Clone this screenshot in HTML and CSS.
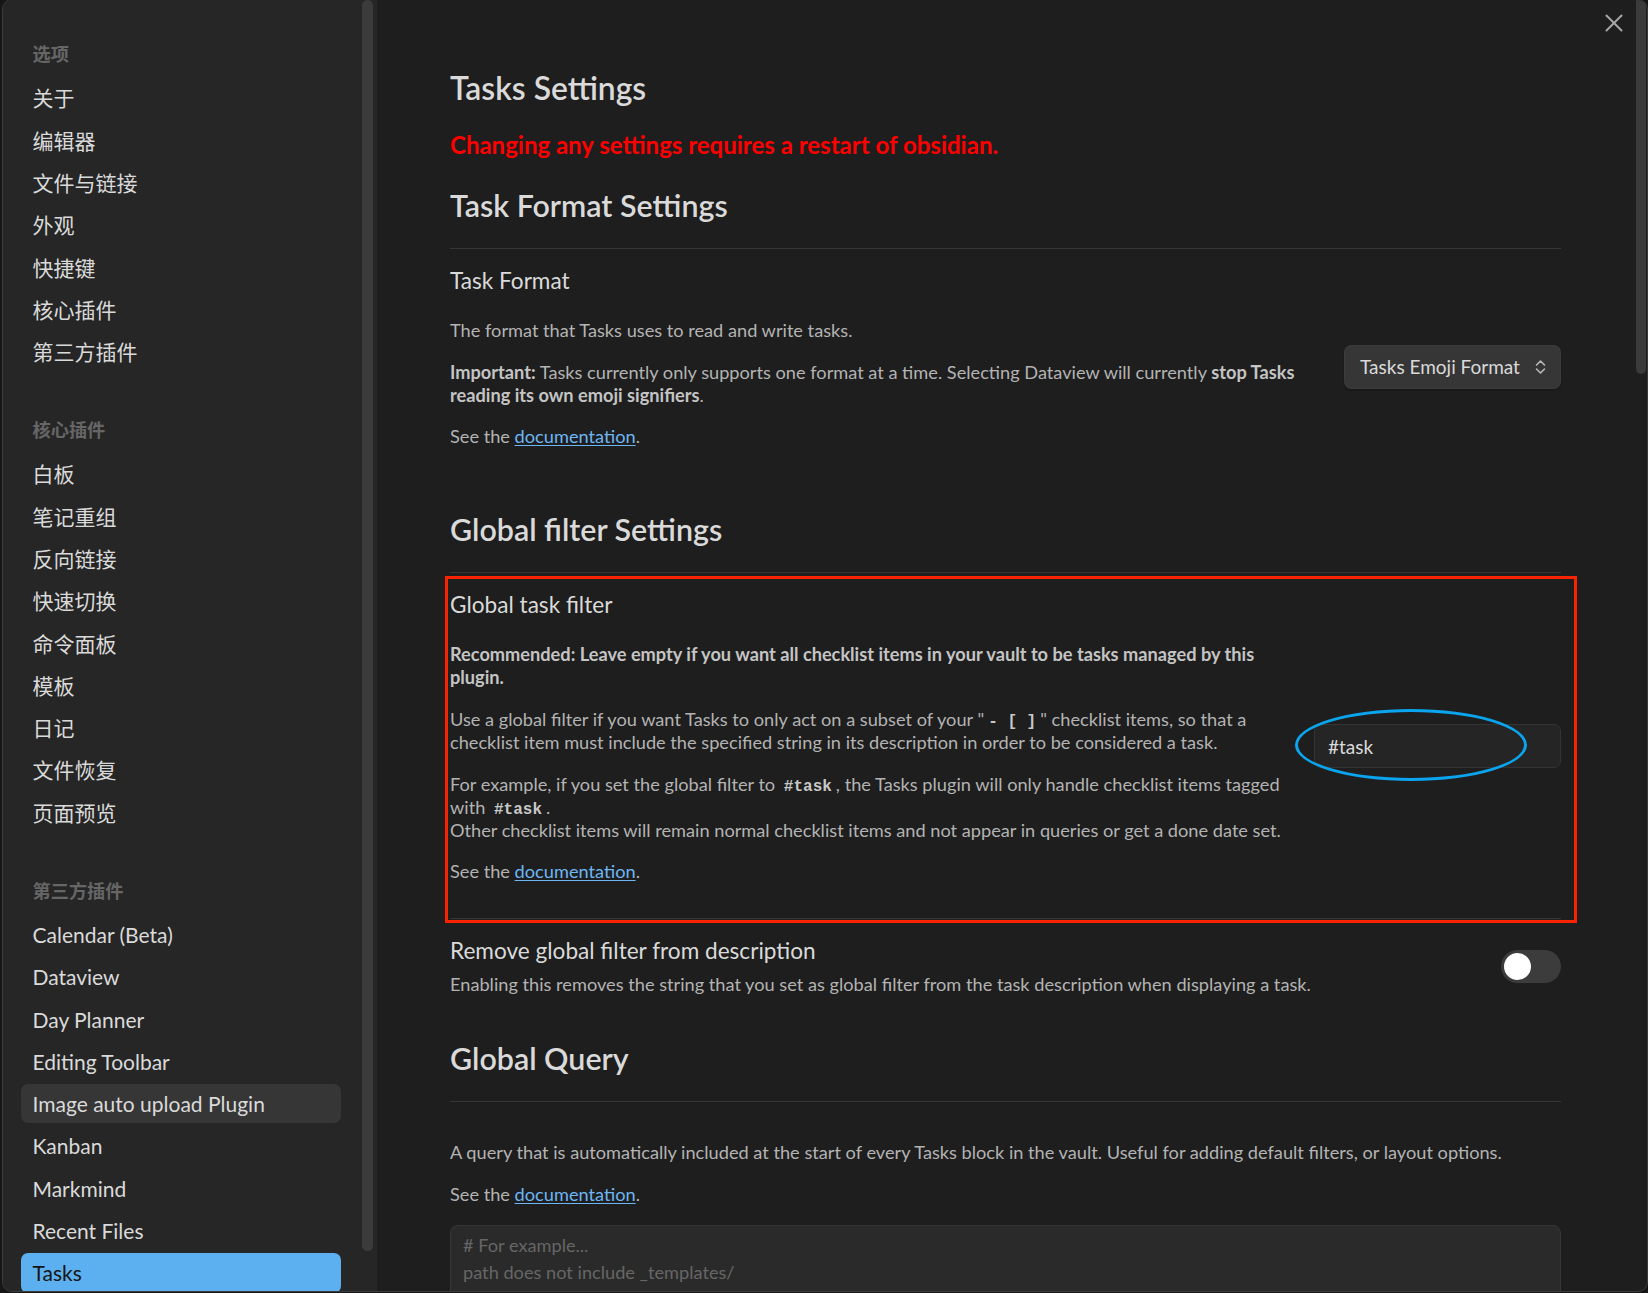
FILE: index.html
```html
<!DOCTYPE html>
<html lang="zh-CN">
<head>
<meta charset="utf-8">
<title>Tasks Settings</title>
<link rel="stylesheet" href="styles.css">
</head>
<body>
<div class="modal">
  <aside class="sidebar">
    <nav class="nav">
      <div class="nav-group">
        <div class="nav-title">选项</div>
        <div class="nav-item">关于</div>
        <div class="nav-item">编辑器</div>
        <div class="nav-item">文件与链接</div>
        <div class="nav-item">外观</div>
        <div class="nav-item">快捷键</div>
        <div class="nav-item">核心插件</div>
        <div class="nav-item">第三方插件</div>
      </div>
      <div class="nav-group">
        <div class="nav-title">核心插件</div>
        <div class="nav-item">白板</div>
        <div class="nav-item">笔记重组</div>
        <div class="nav-item">反向链接</div>
        <div class="nav-item">快速切换</div>
        <div class="nav-item">命令面板</div>
        <div class="nav-item">模板</div>
        <div class="nav-item">日记</div>
        <div class="nav-item">文件恢复</div>
        <div class="nav-item">页面预览</div>
      </div>
      <div class="nav-group">
        <div class="nav-title">第三方插件</div>
        <div class="nav-item">Calendar (Beta)</div>
        <div class="nav-item">Dataview</div>
        <div class="nav-item">Day Planner</div>
        <div class="nav-item">Editing Toolbar</div>
        <div class="nav-item is-hover">Image auto upload Plugin</div>
        <div class="nav-item">Kanban</div>
        <div class="nav-item">Markmind</div>
        <div class="nav-item">Recent Files</div>
        <div class="nav-item is-active">Tasks</div>
      </div>
    </nav>
    <div class="track track-side"><div class="thumb thumb-side"></div></div>
  </aside>

  <main class="main">
    <div class="content">
      <h2 class="title">Tasks Settings</h2>
      <h4 class="warn">Changing any settings requires a restart of obsidian.</h4>

      <div class="heading">Task Format Settings</div>
      <div class="setting">
        <div class="info">
          <div class="name">Task Format</div>
          <div class="desc">
            <p>The format that Tasks uses to read and write tasks.</p>
            <p><strong>Important:</strong> Tasks currently only supports one format at a time. Selecting Dataview will currently <strong>stop Tasks reading its own emoji signifiers</strong>.</p>
            <p>See the <a href="#">documentation</a>.</p>
          </div>
        </div>
        <div class="control">
          <div class="select">
            <span>Tasks Emoji Format</span>
            <svg class="chev" width="11" height="16" viewBox="0 0 11 16"><polyline points="1.5,6 5.5,2 9.5,6" /><polyline points="1.5,10 5.5,14 9.5,10" /></svg>
          </div>
        </div>
      </div>

      <div class="heading">Global filter Settings</div>
      <div class="setting marked">
        <div class="info">
          <div class="name">Global task filter</div>
          <div class="desc">
            <p><strong>Recommended: Leave empty if you want all checklist items in your vault to be tasks managed by this plugin.</strong></p>
            <p>Use a global filter if you want Tasks to only act on a subset of your "<code>- [ ]</code>" checklist items, so that a checklist item must include the specified string in its description in order to be considered a task.</p>
            <p>For example, if you set the global filter to <code>#task</code>, the Tasks plugin will only handle checklist items tagged with <code>#task</code>.<br>Other checklist items will remain normal checklist items and not appear in queries or get a done date set.</p>
            <p>See the <a href="#">documentation</a>.</p>
          </div>
        </div>
        <div class="control">
          <div class="input-wrap">
            <div class="input">#task</div>
            <div class="ellipse"></div>
          </div>
        </div>
        <div class="redbox"></div>
      </div>
      <div class="setting">
        <div class="info">
          <div class="name">Remove global filter from description</div>
          <div class="desc plain">Enabling this removes the string that you set as global filter from the task description when displaying a task.</div>
        </div>
        <div class="control">
          <div class="toggle"><div class="knob"></div></div>
        </div>
      </div>

      <div class="heading">Global Query</div>
      <div class="setting stacked">
        <div class="info">
          <div class="name"></div>
          <div class="desc">
            <p>A query that is automatically included at the start of every Tasks block in the vault. Useful for adding default filters, or layout options.</p>
            <p>See the <a href="#">documentation</a>.</p>
          </div>
        </div>
        <div class="textarea">
          <div># For example...</div>
          <div>path does not include _templates/</div>
          <div>limit 300</div>
          <div>show urgency</div>
        </div>
      </div>
    </div>
    <div class="track track-main"><div class="thumb thumb-main"></div></div>
  </main>

  <div class="close">
    <svg width="18" height="18" viewBox="0 0 18 18"><line x1="1.5" y1="1.5" x2="16.5" y2="16.5" /><line x1="16.5" y1="1.5" x2="1.5" y2="16.5" /></svg>
  </div>
</div>
</body>
</html>
```

FILE: styles.css
```css
html, body {
  margin: 0;
  padding: 0;
}
body {
  background: #161616;
  font-family: Lato, "Noto Sans CJK SC", sans-serif;
  color: #dadada;
  overflow: hidden;
  height: 1293px;
}
.modal {
  position: relative;
  display: flex;
  box-sizing: border-box;
  margin: -1px 0 0 2px;
  height: 1293px;
  border: 1px solid #3c3c3c;
  border-radius: 10px;
  overflow: hidden;
  background: #1e1e1e;
}

/* sidebar */
.sidebar {
  flex: 0 0 374px;
  display: flex;
  background: #262626;
  box-sizing: border-box;
  padding-right: 4px;
}
.nav {
  flex: 1;
  padding: 42px 21px 0 18px;
  display: flex;
  flex-direction: column;
  gap: 46.5px;
  overflow: hidden;
}
.nav-group {
  display: flex;
  flex-direction: column;
  gap: 3px;
}
.nav-title {
  font-size: 18.2px;
  line-height: 24px;
  font-weight: 600;
  color: #666666;
  padding: 0 11.5px;
  margin-bottom: 9.4px;
}
.nav-item {
  font-size: 21px;
  line-height: 29.3px;
  padding: 5px 11.5px;
  border-radius: 7px;
  color: #dadada;
  white-space: nowrap;
}
.nav-item.is-hover {
  background: #363636;
}
.nav-item.is-active {
  background: #5db0ef;
  color: #141414;
}
.track {
  flex: 0 0 11px;
  display: flex;
  flex-direction: column;
}
.thumb {
  background: #3b3b3b;
  border-radius: 6px;
}
.thumb-side {
  height: 1251px;
}

/* main */
.main {
  flex: 1;
  display: flex;
  min-width: 0;
}
.content {
  flex: 1;
  padding: 68px 75px 0 73px;
  overflow: hidden;
  min-width: 0;
}
.track-main {
  flex: 0 0 11px;
}
.thumb-main {
  width: 10px;
  height: 374px;
  border-radius: 0 0 5px 5px;
}
.title {
  margin: 0;
  font-size: 31.8px;
  line-height: 40px;
  font-weight: 600;
  color: #dadada;
}
.warn {
  margin: 23px 0 0;
  font-size: 24px;
  line-height: 28px;
  font-weight: 700;
  color: #ff0000;
}
.heading {
  padding: 27px 0 23.5px;
  font-size: 30.4px;
  line-height: 38px;
  font-weight: 600;
  color: #dadada;
  border-bottom: 1px solid #363636;
}
.setting {
  position: relative;
  display: flex;
  align-items: center;
  padding: 18px 0 16px;
}
.setting + .setting {
  border-top: 1px solid #363636;
}
.info {
  flex: 1 1 auto;
  margin-right: 22.4px;
  min-width: 0;
}
.name {
  font-size: 22.6px;
  line-height: 28px;
  color: #dadada;
}
.desc {
  display: flow-root;
  padding-top: 5.5px;
  font-size: 18.2px;
  line-height: 23px;
  color: #b3b3b3;
}
.desc.plain {
  padding-top: 8px;
}
.desc p {
  margin: 18.8px 0;
}
.desc strong {
  font-weight: 700;
  color: #c4c4c4;
}
.desc a {
  color: #6db6f3;
  text-decoration: underline;
  text-underline-offset: 2px;
}
.desc code {
  font-family: "Liberation Mono", "DejaVu Sans Mono", monospace;
  font-weight: 700;
  font-size: 16px;
  line-height: 0;
  color: #c8c8c8;
  padding: 0 4px;
}
.control {
  flex: 0 0 auto;
  display: flex;
  align-items: center;
}
.select {
  box-sizing: border-box;
  width: 217px;
  height: 44px;
  padding: 0 15px 0 16px;
  display: flex;
  align-items: center;
  justify-content: space-between;
  background: #363636;
  border-radius: 8px;
  box-shadow: 0 1px 2px rgba(0, 0, 0, 0.35), inset 0 0 0 1px #3c3c3c;
  font-size: 19px;
  color: #dadada;
}
.chev polyline {
  fill: none;
  stroke: #b8b8b8;
  stroke-width: 1.6;
  stroke-linecap: round;
  stroke-linejoin: round;
}
.input-wrap {
  position: relative;
}
.input {
  box-sizing: border-box;
  width: 247px;
  height: 44px;
  padding: 0 13px;
  display: flex;
  align-items: center;
  background: #252525;
  border: 1px solid #343434;
  border-radius: 7px;
  font-size: 19px;
  color: #dadada;
}
.ellipse {
  position: absolute;
  left: -19px;
  top: -15px;
  width: 232px;
  height: 72px;
  box-sizing: border-box;
  border: 3px solid #0aa5ee;
  border-radius: 50%;
}
.redbox {
  position: absolute;
  left: -5px;
  right: -16px;
  top: 3px;
  bottom: -5px;
  border: 3px solid #fa2300;
  pointer-events: none;
}
.toggle {
  box-sizing: border-box;
  width: 60px;
  height: 33px;
  padding: 3px;
  border-radius: 17px;
  background: #3c3c3c;
  display: flex;
  align-items: center;
}
.knob {
  width: 27px;
  height: 27px;
  border-radius: 50%;
  background: #ffffff;
}
.setting.stacked {
  flex-direction: column;
  align-items: stretch;
  padding-top: 15.5px;
}
.setting.stacked .info {
  margin-right: 0;
}
.textarea {
  box-sizing: border-box;
  height: 240px;
  padding: 5.5px 12px;
  background: #2a2a2a;
  border: 1px solid #363636;
  border-radius: 8px;
  font-size: 18.2px;
  line-height: 27px;
  color: #666666;
}
.close {
  position: absolute;
  top: 14px;
  right: 24px;
  width: 18px;
  height: 18px;
}
.close line {
  stroke: #a6a6a6;
  stroke-width: 2;
  stroke-linecap: round;
}
```
